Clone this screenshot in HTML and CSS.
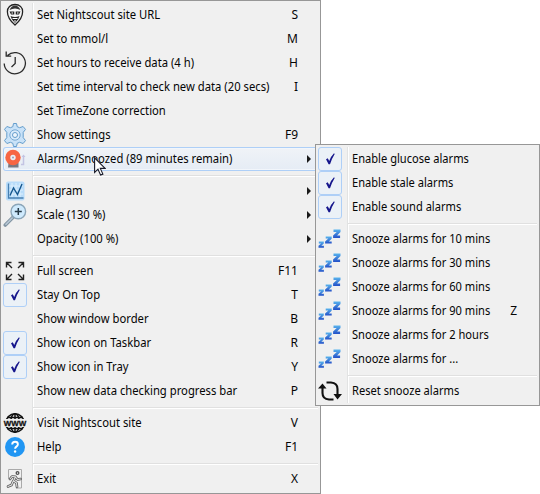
FILE: index.html
```html
<!DOCTYPE html>
<html lang="en">
<head>
<meta charset="utf-8">
<title>Nightscout menu</title>
<link rel="stylesheet" href="styles.css">
</head>
<body>
<svg class="defs" width="0" height="0" aria-hidden="true">
  <defs>
    <linearGradient id="zg" x1="0" y1="0" x2="0" y2="1"><stop offset="0" stop-color="#58b4ee"/><stop offset="1" stop-color="#2451c8"/></linearGradient>
    <symbol id="check" viewBox="1 1 22 22"><path d="M8 12.300 L9.800 11.300 L11.200 14 Q13 9.200 16 6.300 L16.700 6.900 Q13.800 11.500 12 17.300 L10.600 17.300 Z" fill="#16168c"/></symbol>
    <symbol id="zzz" viewBox="0 0 24 24"><g fill="url(#zg)"><path d="M.8 14.500h5v2l-2.500 2.300h2.600v2H.5v-2l2.600-2.300H.8z"/><path d="M7.700 9.500h6v2.200l-2.900 2.700h2.900v2.100H7.100v-2.100l3.200-2.800H7.700z"/><path d="M15.500 2.500h7v2.400l-3.400 3.700h3v2.300h-7V8.600l3.600-3.700h-3.200z"/></g></symbol>
  </defs>
</svg>
<nav class="menu main-menu">
  <div class="item"><svg class="icon" viewBox="0 0 24 24"><path d="M12 1.500C7.400 1.500 4.400 4.400 4.400 8.700c0 5.500 4.100 10.300 7.600 13.400 3.500-3.100 7.600-7.900 7.600-13.400 0-4.300-3-7.200-7.600-7.200z" fill="#f8f8f8" stroke="#222" stroke-width="1.300"/><path d="M6.500 7q2-4.500 5.500-4.500T17.500 7q-5.500-3-11 0z" fill="#333"/><path d="M6.500 8.500h4.800v3H8zM12.700 8.500h4.800L16 11.500h-3.300zM7.500 13q4.500 2 9 0L15 16.500 12 20l-3-3.500z" fill="#222"/><path d="M9.500 15.500h5M11 18h2M8.500 10h1.500M14 10h1.500" stroke="#fff" fill="none"/></svg><span class="label">Set Nightscout site URL</span><kbd>S</kbd></div>
  <div class="item"><span class="icon"></span><span class="label">Set to mmol/l</span><kbd>M</kbd></div>
  <div class="item"><svg class="icon" viewBox="0 0 24 24"><path d="M4.500 4.500A10.600 10.600 0 1 1 1.200 12.500M3.200.5v4.600h5M12.200 6v6.500L8.500 16" fill="none" stroke="#2b2b2b" stroke-width="1.300"/></svg><span class="label">Set hours to receive data (4 h)</span><kbd>H</kbd></div>
  <div class="item"><span class="icon"></span><span class="label">Set time interval to check new data (20 secs)</span><kbd>I</kbd></div>
  <div class="item"><span class="icon"></span><span class="label">Set TimeZone correction</span></div>
  <div class="item"><svg class="icon" viewBox="0 0 24 24"><path d="M10.500 .5h3l.7 3.200 2.400 1 3.500-1.200 2.400 2.900-2.300 3v5.200l2.300 3-2.400 2.900-3.500-1.200-2.400 1-.7 3.200h-3l-.7-3.200-2.400-1-3.500 1.200-2.400-2.900 2.300-3V9.400l-2.300-3 2.400-2.900 3.500 1.200 2.400-1z" fill="#c9e2f8" stroke="#649dcc"/><circle cx="12" cy="12" r="5.200" fill="#d9ebfb" stroke="#78aad4"/><circle cx="12" cy="12" r="2.500" fill="#eff6fc" stroke="#649dcc"/></svg><span class="label">Show settings</span><kbd>F9</kbd></div>
  <div class="item active"><svg class="icon" viewBox="0 0 24 24"><path d="M5.500 16h10v4.500H5z" fill="#777883"/><path d="M18 17.500h2.500V9.500" fill="none" stroke="#c3c4e3" stroke-width="1.500"/><path d="M18.500 10l2-2.500 2 2.500z" fill="#c3c4e3"/><circle cx="10" cy="10.500" r="7.700" fill="#f76543"/><circle cx="10" cy="10.500" r="2.700" fill="#e9edf5"/><circle cx="10" cy="10.500" r="1" fill="#9a9cae"/></svg><span class="label">Alarms/Snoozed (89 minutes remain)</span><i class="arrow"></i></div>
  <div class="separator"></div>
  <div class="item"><svg class="icon" viewBox="0 0 24 24"><rect x="3" y="2.500" width="18.500" height="19" rx="2" fill="#b8dcfa"/><path d="M5 7h15M5 11h15M5 15h15M9 4v16M13 4v16M17 4v16" stroke="#dceffd"/><path d="M5.500 4.500v14.500h15" fill="none" stroke="#477fb1" stroke-width="1.300"/><path d="M7 16.500L10.500 9l4 6.500L19 5" fill="none" stroke="#15578f" stroke-width="1.400"/></svg><span class="label">Diagram</span><i class="arrow"></i></div>
  <div class="item"><svg class="icon" viewBox="0 0 24 24"><path d="M2.300 22l8-8" stroke="#8294a3" stroke-width="3.600" stroke-linecap="round"/><path d="M2.500 21.700l7.200-7.200" stroke="#b8c8d6" stroke-width="1.600"/><circle cx="15.300" cy="8.500" r="7.300" fill="#cfeafd" stroke="#8ba5b8" stroke-width="1.400"/><path d="M11.800 8.500h7M15.300 5v7" stroke="#263a48" stroke-width="1.500"/></svg><span class="label">Scale (130 %)</span><i class="arrow"></i></div>
  <div class="item"><span class="icon"></span><span class="label">Opacity (100 %)</span><i class="arrow"></i></div>
  <div class="separator"></div>
  <div class="item"><svg class="icon" viewBox="0 0 24 24"><path d="M9 9L3.500 3.500M3.500 8.500v-5h5M15 9l5.500-5.500M15.500 3.500h5v5M9 15l-5.500 5.500M3.500 15.500v5h5M15 15l5.500 5.500M15.500 20.500h5v-5" fill="none" stroke="#222" stroke-width="1.400"/></svg><span class="label">Full screen</span><kbd>F11</kbd></div>
  <div class="item"><svg class="icon checked"><use href="#check"/></svg><span class="label">Stay On Top</span><kbd>T</kbd></div>
  <div class="item"><span class="icon"></span><span class="label">Show window border</span><kbd>B</kbd></div>
  <div class="item"><svg class="icon checked"><use href="#check"/></svg><span class="label">Show icon on Taskbar</span><kbd>R</kbd></div>
  <div class="item"><svg class="icon checked"><use href="#check"/></svg><span class="label">Show icon in Tray</span><kbd>Y</kbd></div>
  <div class="item"><span class="icon"></span><span class="label">Show new data checking progress bar</span><kbd>P</kbd></div>
  <div class="separator"></div>
  <div class="item"><svg class="icon" viewBox="0 0 24 24"><g fill="none" stroke="#111" stroke-width="1.500"><circle cx="12" cy="12" r="9.300"/><ellipse cx="12" cy="12" rx="4.500" ry="9.300"/><path d="M12 2.500v19M4 6.500h16M4 17.500h16"/></g><path d="M0 8h24v8H0z" fill="#f0f0f0"/><text class="www" x="12" y="15" text-anchor="middle" textLength="22.500" lengthAdjust="spacingAndGlyphs">WWW</text></svg><span class="label">Visit Nightscout site</span><kbd>V</kbd></div>
  <div class="item"><svg class="icon" viewBox="0 0 24 24"><circle cx="12" cy="12" r="10" fill="#2196f3"/><path d="M9.200 9.500q0-2.700 2.900-2.700 2.800 0 2.800 2.500 0 1.300-1.500 2.300-1.300.9-1.300 2.200" fill="none" stroke="#fff" stroke-width="1.900"/><circle cx="12.100" cy="16.500" r="1.200" fill="#fff"/></svg><span class="label">Help</span><kbd>F1</kbd></div>
  <div class="separator"></div>
  <div class="item"><svg class="icon" viewBox="0 0 24 24"><path d="M5.500 12V2.500h13v18.500H13" fill="none" stroke="#aaa"/><g fill="none" stroke-linecap="round" stroke-linejoin="round"><g stroke="#555" stroke-width="2.600"><circle cx="14.500" cy="6" r=".7"/><path d="M7 12l2-2.500 3.500.2-2 4.300 3 2 .5 4M12.500 10l2 2.500 3-.5M10 14.500L8.500 18 5 19.500"/></g><path d="M7 12l2-2.500 3.500.2-2 4.300 3 2 .5 4M12.500 10l2 2.500 3-.5M10 14.500L8.500 18 5 19.500M14.500 6h.1" stroke="#e4e4e4" stroke-width="1.100"/></g></svg><span class="label">Exit</span><kbd>X</kbd></div>
</nav>
<nav class="menu submenu">
  <div class="item"><svg class="icon checked"><use href="#check"/></svg><span class="label">Enable glucose alarms</span></div>
  <div class="item"><svg class="icon checked"><use href="#check"/></svg><span class="label">Enable stale alarms</span></div>
  <div class="item"><svg class="icon checked"><use href="#check"/></svg><span class="label">Enable sound alarms</span></div>
  <div class="separator"></div>
  <div class="item"><svg class="icon"><use href="#zzz"/></svg><span class="label">Snooze alarms for 10 mins</span></div>
  <div class="item"><svg class="icon"><use href="#zzz"/></svg><span class="label">Snooze alarms for 30 mins</span></div>
  <div class="item"><svg class="icon"><use href="#zzz"/></svg><span class="label">Snooze alarms for 60 mins</span></div>
  <div class="item"><svg class="icon"><use href="#zzz"/></svg><span class="label">Snooze alarms for 90 mins</span><kbd>Z</kbd></div>
  <div class="item"><svg class="icon"><use href="#zzz"/></svg><span class="label">Snooze alarms for 2 hours</span></div>
  <div class="item"><svg class="icon"><use href="#zzz"/></svg><span class="label">Snooze alarms for ...</span></div>
  <div class="separator"></div>
  <div class="item"><svg class="icon" viewBox="0 0 24 24"><path d="M8.500 3.500H13Q19.500 4 19.500 10v5.500M15.500 20.500H11Q4.500 20 4.500 14V9" fill="none" stroke="#111" stroke-width="2.100"/><path d="M0 9.500L4.500 4.500l4 5zM15.500 15l4 5.500 4.500-5.500z" fill="#111"/></svg><span class="label">Reset snooze alarms</span></div>
</nav>
<svg class="cursor" viewBox="0 0 12 19"><path d="M.6.9v14.500l3.400-3.200 2.600 5.900 2.300-1-2.600-5.700h4.800z" fill="#fff" stroke="#171a29" stroke-width="1.100"/></svg>
</body>
</html>
```

FILE: styles.css
```css
body {
  margin: 0;
  width: 540px;
  height: 494px;
  position: relative;
  overflow: hidden;
  background: #fff;
  color: #050505;
  font: 12px/24px "Noto Sans", sans-serif;
}
.defs { position: absolute; }
.menu {
  box-sizing: border-box;
  border: 1px solid #979797;
  padding: 2px;
  background: linear-gradient(90deg, #e2e3e3 1px, #fff 1px) 31px 2px / 2px calc(100% - 4px) no-repeat #f0f0f0;
}
.main-menu { width: 321px; height: 494px; }
.submenu {
  position: absolute;
  left: 315px;
  top: 144px;
  width: 225px;
  height: 262px;
}
.item {
  box-sizing: border-box;
  display: flex;
  height: 24px;
  padding-right: 20px;
  white-space: nowrap;
}
.icon {
  box-sizing: border-box;
  width: 24px;
  height: 24px;
  flex: none;
  margin-right: 10px;
}
.label {
  flex: 1;
  transform: scaleX(.938);
  transform-origin: left;
}
.submenu .label { transform: scaleX(.926); }
kbd { font: inherit; }
.www { font: bold 8px "Liberation Sans", sans-serif; fill: #111; stroke: #111; stroke-width: .3px; }
.checked {
  border: 1px solid #aecff7;
  border-radius: 3px;
  background: #ebf1f7;
}
.active {
  border-radius: 3px;
  box-shadow: inset 0 0 0 1px #aecff7, inset 0 0 0 2px #f2f6fb;
  background: linear-gradient(#f0f3f7, #e5ecf5);
}
.arrow {
  width: 0;
  height: 8px;
  box-sizing: border-box;
  border: 4px solid transparent;
  border-right: 0;
  border-left-color: #1a1a1a;
  margin: 8px -13px 0 0;
}
.separator {
  height: 8px;
  margin-left: 30px;
  background: linear-gradient(#e0e0e0 1px, #fff 1px) 0 4px / 100% 2px no-repeat;
}
.cursor {
  position: absolute;
  left: 94px;
  top: 157px;
  width: 12px;
  height: 19px;
}
```
